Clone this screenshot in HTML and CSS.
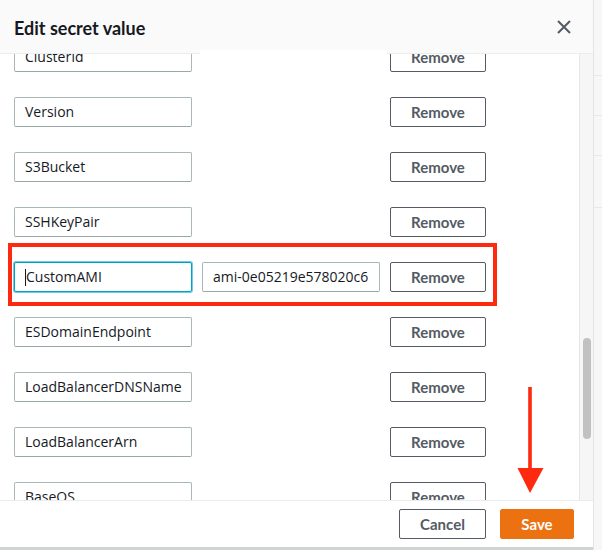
FILE: index.html
```html
<!DOCTYPE html>
<html lang="en">
<head>
<meta charset="utf-8">
<title>Edit secret value</title>
<link rel="stylesheet" href="styles.css">
</head>
<body>
<div class="screen">
  <div class="modal">
    <header class="modal-header">
      <h2 class="modal-title">Edit secret value</h2>
      <button class="close-btn" aria-label="Close">
        <svg width="16" height="16" viewBox="0 0 16 16"><path d="M2 2L14 14M14 2L2 14" stroke="#545b64" stroke-width="2" fill="none"/></svg>
      </button>
    </header>
    <div class="redact-patch"></div>
    <div class="modal-body">
      <div class="scroll-content">
        <div class="rows">
          <div class="row"><div class="field">ClusterId</div><div class="field blank"></div><button class="btn-remove">Remove</button></div>
          <div class="row"><div class="field">Version</div><div class="field blank"></div><button class="btn-remove">Remove</button></div>
          <div class="row"><div class="field">S3Bucket</div><div class="field blank"></div><button class="btn-remove">Remove</button></div>
          <div class="row"><div class="field">SSHKeyPair</div><div class="field blank"></div><button class="btn-remove">Remove</button></div>
          <div class="row highlighted"><div class="field focused"><span class="caret"></span>CustomAMI</div><div class="field">ami-0e05219e578020c6</div><button class="btn-remove">Remove</button><div class="red-box"></div></div>
          <div class="row"><div class="field">ESDomainEndpoint</div><div class="field blank"></div><button class="btn-remove">Remove</button></div>
          <div class="row"><div class="field">LoadBalancerDNSName</div><div class="field blank"></div><button class="btn-remove">Remove</button></div>
          <div class="row"><div class="field">LoadBalancerArn</div><div class="field blank"></div><button class="btn-remove">Remove</button></div>
          <div class="row"><div class="field">BaseOS</div><div class="field blank"></div><button class="btn-remove">Remove</button></div>
        </div>
      </div>
      <div class="scrollbar"><div class="thumb"></div></div>
    </div>
    <footer class="modal-footer">
      <button class="btn btn-cancel">Cancel</button>
      <button class="btn btn-save">Save</button>
    </footer>
    <svg class="arrow" width="30" height="110" viewBox="0 0 30 110">
      <rect x="12.2" y="0" width="3.6" height="84" fill="#fd2a0f"/>
      <polygon points="1.5,81 27.5,81 14,106" fill="#fd2a0f"/>
    </svg>
  </div>
  <div class="page-edge">
    <div class="edge-line l1"></div>
    <div class="edge-line l2"></div>
    <div class="edge-line l3"></div>
    <div class="edge-line l4"></div>
  </div>
</div>
</body>
</html>
```
FILE: styles.css
```css
* { box-sizing: border-box; }
html, body { margin: 0; padding: 0; }
body {
  width: 602px;
  height: 550px;
  overflow: hidden;
  font-family: "Open Sans", "Noto Sans", sans-serif;
  color: #16191f;
  background: #f2f3f3;
}
.screen {
  display: flex;
  width: 602px;
  height: 550px;
}
.modal {
  position: relative;
  width: 594px;
  height: 550px;
  display: flex;
  flex-direction: column;
  background: #fff;
  border-right: 1px solid #e3e5e5;
}
.modal-header {
  height: 54px;
  flex: none;
  display: flex;
  align-items: center;
  justify-content: space-between;
  padding: 2px 21px 0 14px;
  background: #fafafa;
  border-bottom: 1px solid #eaeded;
  position: relative;
  z-index: 2;
}
.modal-title {
  margin: 0;
  font-family: Lato, "Open Sans", sans-serif;
  font-weight: 700;
  font-size: 18px;
  line-height: 22px;
  color: #16191f;
}
.close-btn {
  border: 0;
  background: transparent;
  padding: 0;
  width: 16px;
  height: 16px;
  display: flex;
  margin-bottom: 2px;
}
.redact-patch {
  position: absolute;
  left: 200px;
  top: 50px;
  width: 187px;
  height: 4px;
  background: #fff;
  z-index: 3;
}
.modal-body {
  flex: 1;
  display: flex;
  min-height: 0;
}
.scroll-content {
  flex: 1;
  overflow: hidden;
  padding-left: 14px;
}
.rows {
  margin-top: -12px;
  display: flex;
  flex-direction: column;
  align-items: flex-start;
  gap: 25px;
}
.row {
  position: relative;
  display: flex;
  gap: 10px;
  height: 30px;
}
.field {
  width: 178px;
  height: 30px;
  border: 1px solid #aab7b8;
  border-bottom-color: #9aa7a8;
  border-radius: 2px;
  padding: 0 10px;
  font-size: 14px;
  line-height: 28px;
  white-space: nowrap;
  overflow: hidden;
  color: #16191f;
  background: #fff;
}
.field.blank { visibility: hidden; }
.field.focused {
  border-color: #00a1c9;
  box-shadow: 0 0 0 1px rgba(0, 161, 201, 0.55);
}
.caret {
  display: inline-block;
  width: 1px;
  height: 17px;
  background: #16191f;
  vertical-align: -4px;
}
.btn-remove {
  width: 96px;
  height: 30px;
  border: 1px solid #545b64;
  border-radius: 2px;
  background: #fff;
  font-family: Lato, "Open Sans", sans-serif;
  font-weight: 700;
  font-size: 15px;
  color: #545b64;
  padding: 0;
}
.red-box {
  position: absolute;
  top: -19px;
  left: -6px;
  right: -11px;
  bottom: -14px;
  border: 4px solid #fd2a0f;
  pointer-events: none;
}
.scrollbar {
  width: 14px;
  flex: none;
  background: #f6f6f6;
  border-left: 1px solid #e6e6e6;
  position: relative;
}
.thumb {
  position: absolute;
  left: 3px;
  top: 284px;
  width: 8px;
  height: 101px;
  border-radius: 4px;
  background: #c1c1c1;
}
.modal-footer {
  height: 50px;
  flex: none;
  display: flex;
  justify-content: flex-end;
  align-items: flex-start;
  gap: 14px;
  padding: 8px 19px 0 0;
  border-top: 1px solid #eaeded;
  border-bottom: 3px solid #cfd3d3;
  background: #fff;
}
.btn {
  height: 30px;
  border-radius: 2px;
  font-family: Lato, "Open Sans", sans-serif;
  font-weight: 700;
  font-size: 15px;
  padding: 0;
}
.btn-cancel {
  width: 87px;
  border: 1px solid #545b64;
  background: #fff;
  color: #545b64;
}
.btn-save {
  width: 74px;
  border: 1px solid #ec7211;
  background: #ec7211;
  color: #fff;
}
.arrow {
  position: absolute;
  left: 516px;
  top: 387px;
  z-index: 4;
}
.page-edge {
  flex: 1;
  position: relative;
  background: #f7f7f7;
}
.edge-line {
  position: absolute;
  left: 0;
  right: 0;
  height: 1px;
  background: #e8eaea;
}
.l1 { top: 75px; }
.l2 { top: 115px; }
.l3 { top: 155px; }
.l4 { top: 207px; }
```
